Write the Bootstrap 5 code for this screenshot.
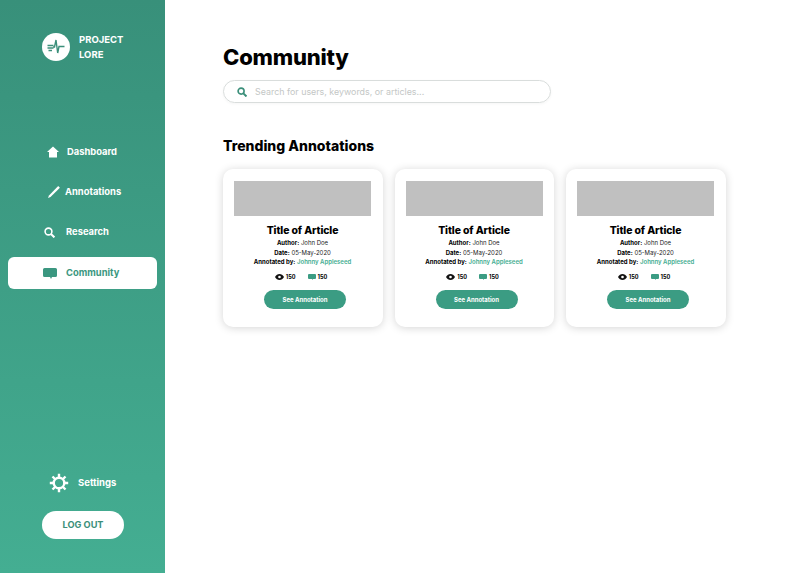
<!doctype html>
<html lang="en"><head><meta charset="utf-8"><title>Community</title>
<link href="https://cdn.jsdelivr.net/npm/bootstrap@5.3.0/dist/css/bootstrap.min.css" rel="stylesheet">
<style>
html,body{height:573px;overflow:hidden}
body{font-family:Inter,"Liberation Sans",sans-serif;color:#000;background:#fff}
.shell{height:573px}
.side{width:165px;flex:none;height:573px;background:linear-gradient(180deg,#38907a,#44ae92);padding:32px 8px 34px;color:#fff}
.brand{padding-left:34px;gap:9px;font-size:9.5px;font-weight:700;line-height:15px;height:30px}
.brand-mark{width:28px;height:28px;border-radius:50%;background:#fff;flex:none}
.menu{margin-top:75px;gap:10px}
.menu-row{height:30px;border-radius:6px;color:#fff;font-size:9.4px;font-weight:700;text-decoration:none;position:relative}
.menu-row.on{background:#fff;color:#3b9780;height:32px}
.menu-row svg{flex:none}
.r1{padding-left:39px;gap:8px}.r2{padding-left:40px;gap:5px}.r3{padding-left:36px;gap:11px}.r4{padding-left:35px;gap:9px}
.gear-row{padding-left:41px;gap:9px;font-size:9.5px;font-weight:700;height:24px}
.logout{width:82px;height:28px;margin:16px 0 0 34px;border-radius:14px;background:#fff;color:#3b8f7a;font-size:9.2px;font-weight:700;border:0;padding:0}
.logout:hover{background:#fff;color:#3b8f7a}
.stage{padding:42px 0 0 58px;min-width:0}
.page-h{font-size:22px;font-weight:800;line-height:30px;margin:0;letter-spacing:-.2px}
.finder{width:328px;height:23px;margin-top:8px;border:1px solid #d9dddc;border-radius:12px;padding-left:13px;gap:8px;box-shadow:0 1px 3px rgba(0,0,0,.04)}
.finder input{border:0;outline:0;flex:1;min-width:0;font-size:8.9px;padding:0;font-family:inherit;background:transparent}
.finder input::placeholder{color:#c4c7c6;opacity:1}
.sub-h{font-size:14px;font-weight:800;line-height:20px;margin:33px 0 13px}
.deck{gap:12px}
.art{width:159.5px;height:158px;border:0;border-radius:10px;box-shadow:0 1px 9px rgba(0,0,0,.17);padding:12px 11.5px 0 11px;text-align:center}
.thumb{height:35px;background:#c0c0c0}
.art-t{font-size:10.4px;font-weight:800;line-height:14px;margin:8px 0 0;letter-spacing:-.1px}
.meta{font-size:6px;line-height:9.6px;margin:0;color:#222;white-space:nowrap}
.meta b{font-weight:700;color:#000}
.meta a{color:#44ad91;font-weight:600;text-decoration:none}
.stats{margin-top:6px;gap:12px;font-size:5.6px;font-weight:700;height:9px;padding-right:3px}
.stat-item{gap:2px}
.see{display:block;width:82px;height:19px;margin:8px 0 0 30px;border:0;padding:0;border-radius:10px;background:#3b9c83;color:#fff;font-size:6px;font-weight:700}
.see:hover{background:#3b9c83;color:#fff}
</style></head>
<body>
<div class="d-flex shell">
<aside class="side d-flex flex-column">
  <div class="d-flex align-items-center brand">
    <span class="brand-mark d-flex align-items-center justify-content-center">
      <svg width="20" height="16" viewBox="0 0 20 16" fill="none" stroke="#3b8f7a" stroke-width="1.4"><path d="M1.500 6.500h6M1.500 9h6M2.500 11.500h3.500"/><path d="M7 8h1.500l1.500-7 1.700 13 1.300-6.500H18.500"/></svg>
    </span>
    <span>PROJECT<br>LORE</span>
  </div>
  <nav class="d-flex flex-column menu">
    <a href="#" class="menu-row d-flex align-items-center r1"><svg width="12" height="12" viewBox="0 0 12 12" fill="#fff"><path d="M6 .5 12 6h-2v5.500H2V6H0z"/></svg>Dashboard</a>
    <a href="#" class="menu-row d-flex align-items-center r2"><svg width="12" height="12" viewBox="0 0 12 12" fill="#fff"><path d="M10.200.1 11.900 1.800 2.500 10.900 0 12l1-2.600z"/></svg>Annotations</a>
    <a href="#" class="menu-row d-flex align-items-center r3"><svg width="11" height="11" viewBox="0 0 11 11" fill="none" stroke="#fff" stroke-width="1.600"><circle cx="4.500" cy="4.500" r="3.400"/><path d="m7 7 3.400 3.400" stroke-width="2"/></svg>Research</a>
    <a href="#" class="menu-row on d-flex align-items-center r4"><svg width="14" height="11" viewBox="0 0 14 11" fill="#3b9780"><path d="M1.500 0h11A1.500 1.500 0 0 1 14 1.500v6A1.500 1.500 0 0 1 12.500 9H9L8 11 7 9H1.500A1.500 1.500 0 0 1 0 7.500v-6A1.500 1.500 0 0 1 1.500 0z"/></svg>Community</a>
  </nav>
  <div class="mt-auto">
    <div class="d-flex align-items-center gear-row">
      <svg width="20" height="20" viewBox="0 0 20 20" fill="none" stroke="#fff"><circle cx="10" cy="10" r="5.300" stroke-width="2.400"/><path d="M10 .8v3.500M10 15.700v3.500M.8 10h3.500M15.700 10h3.500M3.500 3.500 6 6M14 14l2.500 2.500M3.500 16.500 6 14M14 6l2.500-2.500" stroke-width="2.400"/></svg>
      <span>Settings</span>
    </div>
    <button class="btn logout" type="button">LOG OUT</button>
  </div>
</aside>
<main class="stage flex-grow-1">
  <h1 class="page-h">Community</h1>
  <div class="finder d-flex align-items-center">
    <svg width="10" height="10" viewBox="0 0 11 11" fill="none" stroke="#3b8f7a" stroke-width="1.800"><circle cx="4.500" cy="4.500" r="3.300"/><path d="m7 7 3.400 3.400" stroke-width="2.200"/></svg>
    <input type="text" placeholder="Search for users, keywords, or articles..." aria-label="Search">
  </div>
  <h2 class="sub-h">Trending Annotations</h2>
  <div class="d-flex deck">
    <div class="card art">
      <div class="thumb"></div>
      <h3 class="art-t">Title of Article</h3>
      <p class="meta"><b>Author:</b> John Doe</p>
      <p class="meta"><b>Date:</b> 05-May-2020</p>
      <p class="meta"><b>Annotated by:</b> <a href="#">Johnny Appleseed</a></p>
      <div class="d-flex justify-content-center align-items-center stats">
        <span class="d-flex align-items-center stat-item"><svg width="9" height="6" viewBox="0 0 9 6"><path d="M0 3c2-4 7-4 9 0-2 4-7 4-9 0z" fill="#111"/><circle cx="4.500" cy="3" r="1.300" fill="#fff"/></svg>150</span>
        <span class="d-flex align-items-center stat-item"><svg width="8" height="6" viewBox="0 0 8 6"><path d="M1 0h6a1 1 0 0 1 1 1v3a1 1 0 0 1-1 1H5L4.500 6 4 5H1a1 1 0 0 1-1-1V1a1 1 0 0 1 1-1z" fill="#3b9c83"/></svg>150</span>
      </div>
      <button class="btn see" type="button">See Annotation</button>
    </div>
    <div class="card art">
      <div class="thumb"></div>
      <h3 class="art-t">Title of Article</h3>
      <p class="meta"><b>Author:</b> John Doe</p>
      <p class="meta"><b>Date:</b> 05-May-2020</p>
      <p class="meta"><b>Annotated by:</b> <a href="#">Johnny Appleseed</a></p>
      <div class="d-flex justify-content-center align-items-center stats">
        <span class="d-flex align-items-center stat-item"><svg width="9" height="6" viewBox="0 0 9 6"><path d="M0 3c2-4 7-4 9 0-2 4-7 4-9 0z" fill="#111"/><circle cx="4.500" cy="3" r="1.300" fill="#fff"/></svg>150</span>
        <span class="d-flex align-items-center stat-item"><svg width="8" height="6" viewBox="0 0 8 6"><path d="M1 0h6a1 1 0 0 1 1 1v3a1 1 0 0 1-1 1H5L4.500 6 4 5H1a1 1 0 0 1-1-1V1a1 1 0 0 1 1-1z" fill="#3b9c83"/></svg>150</span>
      </div>
      <button class="btn see" type="button">See Annotation</button>
    </div>
    <div class="card art">
      <div class="thumb"></div>
      <h3 class="art-t">Title of Article</h3>
      <p class="meta"><b>Author:</b> John Doe</p>
      <p class="meta"><b>Date:</b> 05-May-2020</p>
      <p class="meta"><b>Annotated by:</b> <a href="#">Johnny Appleseed</a></p>
      <div class="d-flex justify-content-center align-items-center stats">
        <span class="d-flex align-items-center stat-item"><svg width="9" height="6" viewBox="0 0 9 6"><path d="M0 3c2-4 7-4 9 0-2 4-7 4-9 0z" fill="#111"/><circle cx="4.500" cy="3" r="1.300" fill="#fff"/></svg>150</span>
        <span class="d-flex align-items-center stat-item"><svg width="8" height="6" viewBox="0 0 8 6"><path d="M1 0h6a1 1 0 0 1 1 1v3a1 1 0 0 1-1 1H5L4.500 6 4 5H1a1 1 0 0 1-1-1V1a1 1 0 0 1 1-1z" fill="#3b9c83"/></svg>150</span>
      </div>
      <button class="btn see" type="button">See Annotation</button>
    </div>
  </div>
</main>
</div>
<script src="https://cdn.jsdelivr.net/npm/bootstrap@5.3.0/dist/js/bootstrap.bundle.min.js"></script>
</body></html>
